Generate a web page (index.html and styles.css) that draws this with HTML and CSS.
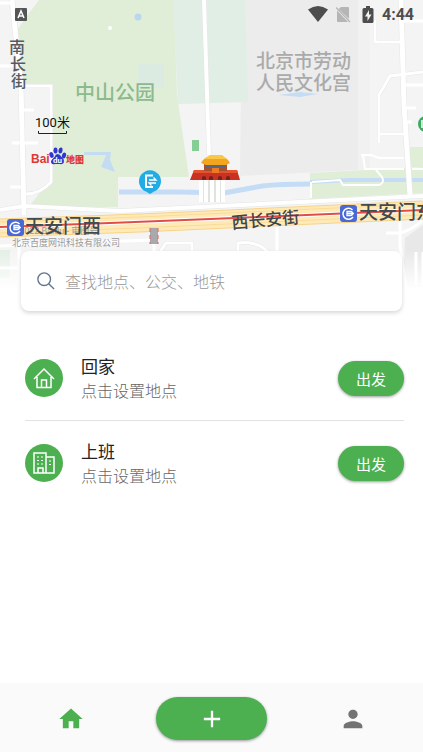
FILE: index.html
```
<!DOCTYPE html>
<html lang="zh-CN">
<head>
    <meta charset="UTF-8">
    <meta name="viewport" content="width=device-width, initial-scale=1.0">
    <title>出行</title>
    <link rel="stylesheet" href="styles.css">
</head>
<body>

<header class="status-bar">
    <svg class="status-app" viewBox="0 0 14 14" aria-hidden="true">
        <rect x="1" y="1" width="12" height="13" rx="1" fill="#555"/>
        <path d="M4 11 7 4l3 7M5.200 9h3.600" fill="none" stroke="#fff" stroke-width="1.500"/>
    </svg>
    <svg class="status-wifi" viewBox="0 0 20 16" aria-hidden="true">
        <path d="M0 3.500Q10-3.500 20 3.500L10 16z" fill="#4d4d4d"/>
    </svg>
    <svg class="status-sim" viewBox="0 0 16 17" aria-hidden="true">
        <path d="M6 1h7q1 0 1 1v11L3.500 3z" fill="#b5b5b5"/>
        <path d="M2 4.500V15q0 1 1 1h10z" fill="#b5b5b5"/>
        <path d="M1 1.500 15 16" stroke="#b5b5b5" stroke-width="1.200"/>
    </svg>
    <svg class="status-battery" viewBox="0 0 12 17" aria-hidden="true">
        <path d="M4 0h4v2h2q1.500 0 1.500 1.500v12Q11.500 17 10 17H2Q.5 17 .5 15.500v-12Q.5 2 2 2h2z" fill="#4d4d4d"/>
        <path d="M7 4 3 10.500h2.500V15l4-6.500H7z" fill="#f3f3f3"/>
    </svg>
    <span class="status-time">4:44</span>
</header>

<main class="content">
    <section class="map" aria-label="地图">
        <svg class="map-canvas" viewBox="0 0 423 290" preserveAspectRatio="xMidYMin slice">
            <rect width="423" height="290" fill="#f4f4f5"/>

            <!-- blocks and parks -->
            <path d="M242 0h116v170l-118 6z" fill="#ececec"/>
            <path d="M358 0h12v170h-12z" fill="#f1f1f2"/>
            <path d="M39 0H174L177 95 189 177H118V207L27 209 39 194 51 180V86H22L17 30 30 12z" fill="#e0eed8"/>
            <path d="M173 0H245L248 102 178 104z" fill="#e0eee6"/>
            <path d="M138 64h26v24h-26z" fill="#dcebe1"/>
            <path d="M310 173 423 167V193L310 199zM410 147h13v20h-13z" fill="#e0eed8"/>
            <path d="M0 250h10v28H0z" fill="#e4efe5"/>
            <path d="M405 238 423 225V290H403z" fill="#e8e8e9"/>
            <path d="M192 140h7v11h-7z" fill="#86cf94"/>

            <!-- water -->
            <path d="M84 152 111 152 110 160 115 172 101 167 106 155H84z" fill="#c4dcf2"/>
            <path d="M119 192H180L224 193 262 186Q280 184 310 184" fill="none" stroke="#c5dcf6" stroke-width="5"/>
            <path d="M310 182 350 180 423 180" fill="none" stroke="#c5dcf6" stroke-width="4"/>
            <path d="M279 95 300 92 318 94 300 97z" fill="#c5dcf6"/>
            <circle cx="138" cy="17" r="3.500" fill="#b9d7ef"/>
            <circle cx="110" cy="28" r="2" fill="#fff"/>

            <!-- road edges -->
            <g fill="none" stroke="#e4e5e5">
                <path d="M12 0 21 86 24 215M401 0 404 105 410 195" stroke-width="6"/>
                <path d="M204 0 209 155M0 210 24 206 120 211 423 196" stroke-width="5"/>
                <path d="M22 86H51V182Q40 194 26 194M375 20V42H401M423 72 390 76 379 95V143M379 134H404M238 252V243Q256 240 268 252M160 252 166 243H192V252" stroke-width="4"/>
            </g>

            <!-- roads -->
            <g fill="none" stroke="#fff">
                <path d="M12 0 21 86 24 215" stroke-width="5"/>
                <path d="M22 86H51V182Q40 194 26 194M23 110H34M12 143H38M0 66H16M10 187H24M0 3H12" stroke-width="3"/>
                <path d="M204 0 209 155" stroke-width="4"/>
                <path d="M401 0 404 105 410 195" stroke-width="5"/>
                <path d="M375 20V42H401M401 21H423M423 72 390 76 379 95V143M404 85H423M379 134H404M404 108H416M404 122H412" stroke-width="3"/>
                <path d="M361 155H371L379 158H404M363 155 365 169 404 169M312 182 340 180 343 185H379Q385 183 382 177L376 170M311 182V198M412 169H423" stroke-width="2"/>
                <path d="M0 210 24 206 120 211 423 196" stroke-width="4"/>
                <path d="M0 246 150 240M19 240V290M0 268H19M154 236V254M277 227V252M238 252V243Q256 240 268 252M160 252 166 243H192V252M400 205V245L406 290M386 233H400Q412 230 423 220M416 252V285M423 252V285" stroke-width="3"/>
            </g>

            <!-- avenue -->
            <path d="M0 228 140 223 423 210" fill="none" stroke="#f7d38a" stroke-width="19"/>
            <path d="M0 228 140 223 423 210" fill="none" stroke="#ffeab7" stroke-width="17"/>
            <path d="M0 222 140 217 423 204M0 233 140 228 423 215" fill="none" stroke="#fadb98" stroke-width="1"/>
            <path d="M0 227 110 223 235 218 423 210" fill="none" stroke="#fff" stroke-width="4"/>
            <path d="M0 227 110 223 235 218 423 210" fill="none" stroke="#e04d48" stroke-width="2"/>
            <path d="M150 228h8v16h-8z" fill="#a9a9ad"/>
            <path d="M150 228v16M158 228v16" stroke="#df625f" stroke-dasharray="4 3"/>

            <!-- Tiananmen -->
            <path d="M199 180h26v22h-26z" fill="#dfe4dc"/>
            <path d="M201 180v22M206 180v22M212 180v22M218 180v22M223 180v22" stroke="#fff" stroke-width="4"/>
            <path d="M194 170H237L240 180H190z" fill="#c93222"/>
            <path d="M194 170H237L238 173H193z" fill="#e4532d"/>
            <path d="M204 163h23v8h-23z" fill="#a74f31"/>
            <path d="M206 166h20" stroke="#536883" stroke-width="3" stroke-dasharray="3 1"/>
            <path d="M207 157 203 160 201 163 206 165H226L230 163 228 160 224 157z" fill="#f3a51e"/>
            <path d="M210 155 204 159H227L222 155z" fill="#fac646"/>
            <path d="M212 168h7v5h-7z" fill="#f07a23"/>
            <path d="M202 180v-3q2-2 4 0v3M209 180v-3q2-2 4 0v3M218 180v-3q2-2 4 0v3M226 180v-3q2-2 4 0v3" fill="#7b211c"/>

            <!-- place names -->
            <g class="street-name">
                <text x="9" y="53">南</text>
                <text x="10" y="70">长</text>
                <text x="11" y="87">街</text>
            </g>
            <text class="park-name" x="75" y="100">中山公园</text>
            <g class="area-name">
                <text x="256" y="68">北京市劳动</text>
                <text x="256" y="90">人民文化宫</text>
            </g>
            <text class="road-name" x="232" y="229" transform="rotate(-5 232 229)">西长安街</text>

            <!-- scale -->
            <text class="scale-text" x="35" y="127">100米</text>
            <path d="M38.500 131V133.500H66.500V131" fill="none" stroke="#222"/>

            <!-- Baidu logo -->
            <text class="logo-latin" x="31" y="163">Bai</text>
            <g fill="#3136cf">
                <ellipse cx="51.500" cy="155" rx="2" ry="3" transform="rotate(-20 51.500 155)"/>
                <ellipse cx="55.500" cy="150.500" rx="2" ry="3"/>
                <ellipse cx="60.500" cy="150.500" rx="2" ry="3" transform="rotate(12 60.500 150.500)"/>
                <ellipse cx="64" cy="155.500" rx="2" ry="3" transform="rotate(20 64 155.500)"/>
                <path d="M57.500 154q2.500 0 4 3l2 2q2 6-4 5h-4q-6 1-4-4l3-3q1-3 3-3"/>
            </g>
            <text class="logo-du" x="53" y="163">du</text>
            <text class="logo-map" x="66" y="163">地图</text>

            <!-- entrance pin -->
            <path d="M150 194 146 191.500A11 11 0 1 1 154 191.500z" fill="#20ace4"/>
            <path d="M153 175.500H146V187H153" fill="none" stroke="#fff" stroke-width="2"/>
            <path d="M149 180H156L153.500 177.500M156 183H149L151.500 185.500" fill="none" stroke="#fff" stroke-width="1.300"/>

            <g class="license">
                <text x="12" y="234">©2022 Baidu - 审图号</text>
                <text x="12" y="246">北京百度网讯科技有限公司</text>
            </g>

            <!-- subway stations -->
            <g id="metro">
                <rect x="7" y="219" width="17" height="17" rx="3" fill="#4869d6"/>
                <path d="M19.500 224A5.500 5.500 0 1 0 20 231" fill="none" stroke="#fff" stroke-width="1.500"/>
                <path d="M14 225.500H17.500A2 2 0 0 1 17.500 229.500H14zM14 227.500H21" fill="none" stroke="#fff" stroke-width="1.300"/>
            </g>
            <use href="#metro" x="333" y="-14"/>
            <text class="station-name" x="25" y="233">天安门西</text>
            <text class="station-name" x="359" y="219">天安门东</text>
            <circle cx="426" cy="124" r="8" fill="#38ad60"/>
            <path d="M422 120v8" stroke="#fff" stroke-width="1.500"/>
        </svg>
    </section>

    <form class="search" role="search">
        <svg class="search-icon" viewBox="0 0 20 20" aria-hidden="true">
            <circle cx="8" cy="8" r="7" fill="none" stroke="#60758f" stroke-width="1.500"/>
            <path d="m13 13 6 6" stroke="#60758f" stroke-width="1.500"/>
        </svg>
        <input class="search-input" type="text" placeholder="查找地点、公交、地铁" aria-label="查找地点、公交、地铁">
    </form>

    <ul class="places">
        <li class="place">
            <span class="place-icon">
                <svg viewBox="0 0 22 22" aria-hidden="true">
                    <path d="M1 12 11 2l10 10M4 10v10.500h14V10M8.500 20v-7h5v7"/>
                </svg>
            </span>
            <div class="place-text">
                <h2 class="place-name">回家</h2>
                <p class="place-hint">点击设置地点</p>
            </div>
            <button class="go-button" type="button" aria-label="回家 出发">出发</button>
        </li>
        <li class="place">
            <span class="place-icon">
                <svg viewBox="0 0 22 22" aria-hidden="true">
                    <path d="M1 21V1h12v20zM13 5h8v16h-8M5 21v-5h5v5"/>
                    <path d="M4 5h2M8 5h2M4 8.500h2M8 8.500h2M4 12h2M8 12h2M16 9h2M16 12.500h2" stroke-width="1"/>
                </svg>
            </span>
            <div class="place-text">
                <h2 class="place-name">上班</h2>
                <p class="place-hint">点击设置地点</p>
            </div>
            <button class="go-button" type="button" aria-label="上班 出发">出发</button>
        </li>
    </ul>
</main>

<nav class="tab-bar">
    <a class="tab active" href="#home" aria-label="首页">
        <svg viewBox="0 0 24 24"><path d="M10 20v-6h4v6h5v-8h3L12 3 2 12h3v8z"/></svg>
    </a>
    <button class="add-button" type="button" aria-label="添加">
        <svg viewBox="0 0 24 24"><path d="M19 13h-6v6h-2v-6H5v-2h6V5h2v6h6z"/></svg>
    </button>
    <a class="tab" href="#me" aria-label="我的">
        <svg viewBox="0 0 24 24"><path d="M12 12c2.210 0 4-1.790 4-4s-1.790-4-4-4-4 1.790-4 4 1.790 4 4 4zm0 2c-2.670 0-8 1.340-8 4v2h16v-2c0-2.660-5.330-4-8-4z"/></svg>
    </a>
</nav>

</body>
</html>
```
FILE: styles.css
```
* {
    box-sizing: border-box;
}
body {
    display: flex;
    flex-direction: column;
    min-height: 100vh;
    margin: 0;
    background-color: #fff;
    color: #222;
    font-family: Roboto, "Noto Sans CJK SC", sans-serif;
}
button, input {
    font-family: inherit;
}

/* status bar over the map */
.status-bar {
    position: absolute;
    top: 0;
    left: 0;
    right: 0;
    z-index: 1;
    display: flex;
    align-items: center;
    height: 28px;
    padding: 0 9px 0 14px;
    color: #4d4d4d;
}
.status-app {
    width: 14px;
    height: 14px;
    margin-right: auto;
}
.status-wifi {
    width: 20px;
    height: 16px;
}
.status-sim {
    width: 16px;
    height: 17px;
    margin-left: 7px;
}
.status-battery {
    width: 12px;
    height: 17px;
    margin-left: 11px;
}
.status-time {
    margin-left: 8px;
    padding-top: 2px;
    font-size: 16px;
    line-height: 20px;
    font-weight: 700;
}

.content {
    flex: 1;
}
.map {
    position: relative;
    height: 290px;
    overflow: hidden;
}
.map::after {
    content: "";
    position: absolute;
    inset: 250px 0 0;
    background: linear-gradient(rgba(255, 255, 255, 0), #fff);
}
.map-canvas {
    display: block;
    width: 100%;
    height: 100%;
}
.street-name {
    font-size: 16px;
    font-weight: 500;
    fill: #555b61;
}
.park-name {
    font-size: 20px;
    font-weight: 500;
    fill: #8dba8c;
}
.area-name {
    font-size: 19px;
    font-weight: 500;
    fill: #aaa;
}
.road-name {
    font-size: 17px;
    font-weight: 500;
    fill: #3f4549;
}
.station-name {
    font-size: 19px;
    font-weight: 500;
    fill: #3f4b50;
}
.scale-text {
    font-size: 13px;
    fill: #111;
}
.logo-latin {
    font-family: "Liberation Sans", Arial, sans-serif;
    font-size: 12px;
    font-weight: 700;
    fill: #df3836;
}
.logo-du {
    font-size: 8px;
    font-weight: 700;
    fill: #fff;
}
.logo-map {
    font-size: 9px;
    font-weight: 900;
    fill: #df3836;
}
.license {
    font-size: 9px;
    fill: #999;
}

.search {
    position: relative;
    display: flex;
    align-items: center;
    gap: 10px;
    height: 60px;
    margin: -39px 21px 0;
    padding: 0 16px;
    background-color: #fff;
    border-radius: 8px;
    box-shadow: 0 2px 4px rgba(0, 0, 0, 0.16);
}
.search-icon {
    flex: none;
    width: 18px;
    height: 18px;
}
.search-input {
    flex: 1;
    min-width: 0;
    padding: 2px 0 0;
    border: 0;
    outline: 0;
    background: none;
    color: #222;
    font-size: 16px;
    font-weight: 300;
}
.search-input::placeholder {
    color: #999;
}

.places {
    margin: 25px 19px 0 25px;
    padding: 0;
    list-style: none;
}
.place {
    display: flex;
    align-items: center;
    height: 84px;
}
.place + .place {
    height: 85px;
    border-top: 1px solid #e2e2e2;
}
.place-icon {
    display: flex;
    align-items: center;
    justify-content: center;
    width: 38px;
    height: 38px;
    border-radius: 50%;
    background-color: #4caf50;
}
.place-icon svg {
    width: 22px;
    height: 22px;
    fill: none;
    stroke: #fff;
    stroke-width: 1.5;
}
.place-text {
    flex: 1;
    padding: 2px 0 0 18px;
}
.place-name {
    margin: 0;
    font-size: 17px;
    line-height: 25px;
    font-weight: 400;
}
.place-hint {
    margin: 0;
    color: #666;
    font-size: 16px;
    line-height: 24px;
    font-weight: 300;
}
.go-button {
    width: 66px;
    height: 35px;
    padding: 0;
    border: 0;
    border-radius: 18px;
    background-color: #4caf50;
    color: #fff;
    font-size: 15px;
    box-shadow: 0 1px 3px rgba(0, 0, 0, 0.4);
    cursor: pointer;
}

.tab-bar {
    display: grid;
    grid-template-columns: 1fr 1fr 1fr;
    align-items: center;
    justify-items: center;
    height: 69px;
    padding-top: 2px;
    background-color: #fafafa;
}
.tab {
    color: #737373;
}
.tab.active {
    color: #4caf50;
}
.tab-bar svg {
    display: block;
    width: 28px;
    height: 28px;
    fill: currentColor;
}
.add-button {
    display: flex;
    align-items: center;
    justify-content: center;
    width: 111px;
    height: 43px;
    border: 0;
    border-radius: 22px;
    background-color: #4caf50;
    color: #fff;
    box-shadow: 0 1px 3px rgba(0, 0, 0, 0.4);
    cursor: pointer;
}
```
